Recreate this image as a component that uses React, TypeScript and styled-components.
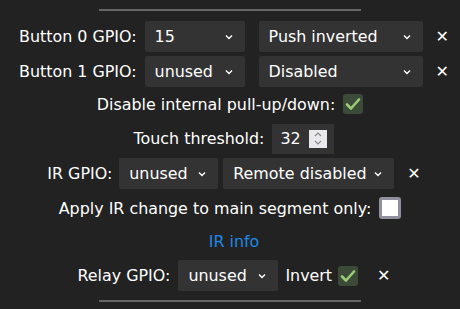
import React from "react";
import styled, { createGlobalStyle } from "styled-components";

const GlobalStyle = createGlobalStyle`
  html, body {
    margin: 0;
    padding: 0;
    background: #222;
  }
  body {
    font-family: "DejaVu Sans", Verdana, sans-serif;
    font-size: 15.9px;
    color: #fff;
  }
`;

const Page = styled.div`
  width: 460px;
  height: 309px;
  background: #222;
  display: flex;
  flex-direction: column;
  align-items: center;
  padding-top: 9px;
  box-sizing: border-box;
  overflow: hidden;
`;

const Rule = styled.hr<{ $gap: number }>`
  width: 262px;
  height: 0;
  border: none;
  border-top: 2px solid #666;
  margin: ${(p) => p.$gap}px 0 0 0;
`;

const Row = styled.div<{ $top: number; $h?: number; $lead?: number }>`
  display: flex;
  align-items: center;
  justify-content: center;
  height: ${(p) => p.$h || 31}px;
  margin-top: ${(p) => p.$top}px;
  padding-left: ${(p) => p.$lead || 0}px;
  white-space: nowrap;
`;

const Label = styled.span<{ $gap?: number }>`
  margin-right: ${(p) => (p.$gap === undefined ? 8 : p.$gap)}px;
`;

const SelectWrap = styled.div<{ $w: number; $gap?: number }>`
  position: relative;
  width: ${(p) => p.$w}px;
  height: 31px;
  margin-right: ${(p) => p.$gap || 0}px;
`;

const NativeSelect = styled.select`
  appearance: none;
  -webkit-appearance: none;
  width: 100%;
  height: 100%;
  background: #333;
  color: #fff;
  border: none;
  border-radius: 2px;
  padding: 0 24px 0 10px;
  font-family: inherit;
  font-size: 15.9px;
  outline: none;
`;

const Chevron = styled.svg`
  position: absolute;
  right: 12px;
  top: 13px;
  width: 8px;
  height: 6px;
  pointer-events: none;
`;

const Close = styled.span<{ $left: number }>`
  margin-left: ${(p) => p.$left}px;
  font-size: 16px;
  line-height: 1;
`;

const Check = styled.span<{ $on: boolean; $left?: number }>`
  display: inline-flex;
  align-items: center;
  justify-content: center;
  box-sizing: border-box;
  width: ${(p) => (p.$on ? 20 : 22)}px;
  height: ${(p) => (p.$on ? 20 : 22)}px;
  margin-left: ${(p) => p.$left || 0}px;
  border-radius: 3px;
  background: ${(p) => (p.$on ? "#3c4b38" : "#fff")};
  border: ${(p) => (p.$on ? "none" : "3px solid #8f8f9d")};
`;

const NumberBox = styled.div`
  display: flex;
  align-items: center;
  width: 62px;
  height: 30px;
  background: #333;
  box-sizing: border-box;
  padding: 0 7px 0 8px;
`;

const NumberText = styled.span`
  flex: 1;
`;

const Spinner = styled.span`
  display: inline-flex;
  flex-direction: column;
  align-items: center;
  justify-content: center;
  gap: 3px;
  width: 18px;
  height: 18px;
  background: #e9e9ed;
`;

const Link = styled.a`
  color: #1e88e5;
  text-decoration: none;
  margin-top: 11px;
  padding-left: 8px;
  line-height: 20px;
`;

const Down = () => (
  <Chevron viewBox="0 0 8 6">
    <path d="M1 1.5 L4 4.5 L7 1.5" stroke="#fff" strokeWidth="1.4" fill="none" />
  </Chevron>
);

const Select = ({ w, value, gap }: { w: number; value: string; gap?: number }) => (
  <SelectWrap $w={w} $gap={gap}>
    <NativeSelect defaultValue={value}>
      <option>{value}</option>
    </NativeSelect>
    <Down />
  </SelectWrap>
);

const Tick = () => (
  <svg width="16" height="14" viewBox="0 0 16 14">
    <path d="M2 7.5 L6 11.5 L14 2.5" stroke="#9ccc78" strokeWidth="2.6" fill="none" strokeLinecap="round" strokeLinejoin="round" />
  </svg>
);

export default function App() {
  return (
    <>
      <GlobalStyle />
      <Page>
        <Rule $gap={0} />
        <Row $top={10} $lead={8}>
          <Label>Button 0 GPIO:</Label>
          <Select w={100} value="15" gap={14} />
          <Select w={164} value="Push inverted" />
          <Close $left={13}>✕</Close>
        </Row>
        <Row $top={4} $lead={8}>
          <Label>Button 1 GPIO:</Label>
          <Select w={100} value="unused" gap={14} />
          <Select w={164} value="Disabled" />
          <Close $left={13}>✕</Close>
        </Row>
        <Row $top={4} $h={26}>
          <Label>Disable internal pull-up/down:</Label>
          <Check $on>
            <Tick />
          </Check>
        </Row>
        <Row $top={6} $lead={8}>
          <Label>Touch threshold:</Label>
          <NumberBox>
            <NumberText>32</NumberText>
            <Spinner>
              <svg width="8" height="5" viewBox="0 0 8 5">
                <path d="M1 4 L4 1 L7 4" stroke="#888" strokeWidth="1.2" fill="none" />
              </svg>
              <svg width="8" height="5" viewBox="0 0 8 5">
                <path d="M1 1 L4 4 L7 1" stroke="#888" strokeWidth="1.2" fill="none" />
              </svg>
            </Spinner>
          </NumberBox>
        </Row>
        <Row $top={4} $lead={8}>
          <Label $gap={7}>IR GPIO:</Label>
          <Select w={99} value="unused" gap={5} />
          <Select w={171} value="Remote disabled" />
          <Close $left={13}>✕</Close>
        </Row>
        <Row $top={6} $h={26}>
          <Label>Apply IR change to main segment only:</Label>
          <Check $on={false} />
        </Row>
        <Link href="#">IR info</Link>
        <Row $top={8} $lead={8}>
          <Label>Relay GPIO:</Label>
          <Select w={100} value="unused" gap={7} />
          <span>Invert</span>
          <Check $on $left={6}>
            <Tick />
          </Check>
          <Close $left={19}>✕</Close>
        </Row>
        <Rule $gap={9} />
      </Page>
    </>
  );
}
